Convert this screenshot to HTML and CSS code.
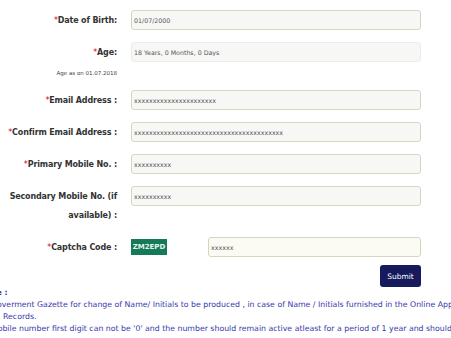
FILE: index.html
```html
<!DOCTYPE html>
<html lang="en">

<head>
    <meta charset="UTF-8">
    <meta name="viewport" content="width=device-width, initial-scale=1.0">
    <title>Registration</title>
    <link rel="stylesheet" href="styles.css">
</head>

<body>

    <div class="form">
        <div class="row">
            <label class="lbl"><span class="req">*</span>Date of Birth:</label>
            <input class="inp" type="text" value="01/07/2000">
        </div>
        <div class="row">
            <label class="lbl"><span class="req">*</span>Age:</label>
            <input class="inp inp-off" type="text" value="18 Years, 0 Months, 0 Days" readonly>
        </div>
        <div class="age-note">Age as on 01.07.2018</div>
        <div class="row">
            <label class="lbl"><span class="req">*</span>Email Address :</label>
            <input class="inp" type="text" value="xxxxxxxxxxxxxxxxxxxxxx">
        </div>
        <div class="row">
            <label class="lbl"><span class="req">*</span>Confirm Email Address :</label>
            <input class="inp" type="text" value="xxxxxxxxxxxxxxxxxxxxxxxxxxxxxxxxxxxxxxxx">
        </div>
        <div class="row">
            <label class="lbl"><span class="req">*</span>Primary Mobile No. :</label>
            <input class="inp" type="text" value="xxxxxxxxxx">
        </div>
        <div class="row">
            <label class="lbl lbl-wrap">Secondary Mobile No. (if available) :</label>
            <input class="inp" type="text" value="xxxxxxxxxx">
        </div>
        <div class="row">
            <label class="lbl"><span class="req">*</span>Captcha Code :</label>
            <div class="captcha">
                <span class="captcha-img">ZM2EPD</span>
                <input class="inp inp-cap" type="text" value="xxxxxx">
            </div>
        </div>
        <div class="actions">
            <button class="submit-btn">Submit</button>
        </div>
    </div>

    <!-- notes, page is scrolled a little to the right -->
    <div class="notes">
        <div class="notes-title">Note :</div>
        <div class="note-line">1. Goverment Gazette for change of Name/ Initials to be produced , in case of Name / Initials furnished in the Online Application differs from the Official</div>
        <div class="note-line note-cont">Records.</div>
        <div class="note-line">2. Mobile number first digit can not be '0' and the number should remain active atleast for a period of 1 year and should not be changed.</div>
    </div>

</body>

</html>
```

FILE: styles.css
```css
html,
body {
    overflow: hidden;
}

body {
    margin: 0;
    background: #fff;
    font-family: "DejaVu Sans", Verdana, sans-serif;
    color: #333;
}

.form {
    padding-top: 10px;
    width: 421px;
}

.row {
    display: grid;
    grid-template-columns: 117px 290px;
    column-gap: 14px;
    align-items: start;
    margin-bottom: 12px;
}

.lbl {
    text-align: right;
    font-size: 8px;
    letter-spacing: -0.15px;
    font-weight: bold;
    line-height: 19px;
    padding-top: 1px;
    color: #333;
    white-space: nowrap;
}

.lbl-wrap {
    white-space: normal;
    padding-left: 8px;
}

.req {
    color: #d0021b;
    font-weight: normal;
}

.inp {
    box-sizing: border-box;
    width: 100%;
    height: 20px;
    margin: 0;
    padding: 0 2px;
    border: 1px solid #d5d5c0;
    border-radius: 3px;
    background: #f7f7f5;
    font-family: "DejaVu Sans", Verdana, sans-serif;
    font-size: 6.3px;
    color: #555;
    outline: none;
}

.inp-off {
    border-color: #ebebeb;
}

.age-note {
    width: 117px;
    text-align: right;
    font-size: 5.5px;
    color: #444;
    margin-top: -6px;
    margin-bottom: 12px;
    line-height: 10px;
}

.captcha {
    display: flex;
    align-items: center;
    gap: 41px;
}

.captcha-img {
    background: #157a58;
    color: #e8f3ee;
    font-size: 7px;
    font-weight: bold;
    width: 36px;
    height: 16px;
    line-height: 16px;
    text-align: center;
    flex-shrink: 0;
}

.inp-cap {
    width: 213px;
    background: #fbfbf4;
}

.actions {
    display: flex;
    justify-content: flex-end;
    margin-top: -4px;
}

.submit-btn {
    background: #141a5c;
    color: #fff;
    border: none;
    border-radius: 3px;
    width: 41px;
    height: 22px;
    font-family: "DejaVu Sans", Verdana, sans-serif;
    font-size: 7.5px;
    padding: 0;
}

.notes {
    margin-left: -19px;
    color: #3838ac;
    font-size: 7.8px;
    line-height: 12px;
    white-space: nowrap;
}

.notes-title {
    font-weight: bold;
}

.note-cont {
    padding-left: 22px;
}
```
